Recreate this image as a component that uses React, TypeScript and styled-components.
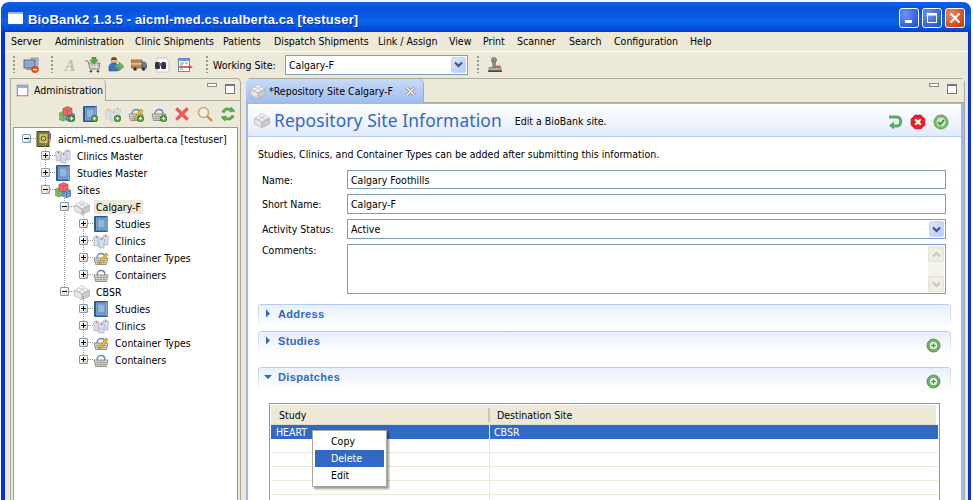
import React from "react";
import styled, { createGlobalStyle } from "styled-components";

const Global = createGlobalStyle`
  html, body { margin: 0; padding: 0; background: #fff; overflow: hidden; }
  body { font-family: "DejaVu Sans Condensed", "DejaVu Sans", sans-serif; font-stretch: condensed; font-size: 10.5px; color: #000; }
`;

const Screen = styled.div`
  width: 973px; height: 500px; box-sizing: border-box; padding: 2px 2px 0 1px; overflow: hidden; background: #fff;
`;
const Frame = styled.div`
  height: 100%; display: flex; flex-direction: column; box-sizing: border-box;
  border-radius: 8px 8px 0 0; overflow: hidden;
  background: linear-gradient(#0a5fe8 0, #0453dd 8px, #0a63ee 20px, #0349d0 28px, #0831d9 30px);
  padding: 0 3px 0 4px;
`;
const TitleBar = styled.div`
  height: 30px; flex: none; display: flex; align-items: center; padding: 0 3px 0 3px;
`;
const AppGlyph = styled.div`
  width: 15px; height: 12px; flex: none; background: #fff; border-top: 2px solid #9bb8ee; box-sizing: border-box; margin: 2px 5px 0 0;
`;
const TitleText = styled.div`
  flex: 1; color: #fff; font: bold 13px "Liberation Sans", sans-serif; letter-spacing: 0.17px; margin-top: 4px;
  text-shadow: 1px 1px 0 #0a2fa8; white-space: nowrap;
`;
const WinButtons = styled.div`
  display: flex; gap: 3px; margin-top: 2px;
`;
const WinButton = styled.div<{ $close?: boolean }>`
  width: 20px; height: 20px; box-sizing: border-box; border: 1px solid #fff; border-radius: 3px;
  display: flex; align-items: center; justify-content: center;
  background: ${p => (p.$close ? "radial-gradient(circle at 30% 30%, #e98a6c, #d04a20 70%, #b83a12)" : "radial-gradient(circle at 30% 30%, #6f95ef, #2e5fdd 70%, #2048c4)")};
`;
const Client = styled.div`
  flex: 1; min-height: 0; display: flex; flex-direction: column; background: #ece9d8;
`;
const MenuBar = styled.div`
  height: 20px; flex: none; box-sizing: border-box; display: flex; align-items: center; padding: 0 0 1px 6px; border-bottom: 1px solid #fff;
`;
const MenuItem = styled.span<{ $w: number }>`width: ${p => p.$w}px; flex: none; white-space: nowrap;`;
const ToolBar = styled.div`
  height: 25px; flex: none; display: flex; align-items: center; padding-left: 8px;
`;
const Grip = styled.span<{ $gap?: number; $lead?: number }>`
  width: 2px; height: 17px; flex: none; margin-right: ${p => p.$gap ?? 8}px; margin-left: ${p => p.$lead ?? 0}px;
  background: repeating-linear-gradient(#9a978a 0 2px, transparent 2px 4px);
`;
const ToolIcon = styled.span<{ $mr?: number }>`
  width: 16px; height: 16px; flex: none; margin-right: ${p => p.$mr ?? 7}px; display: block;
  & > svg { display: block; }
`;
const WorkLabel = styled.span`width: 72px; flex: none; white-space: nowrap;`;
const Combo = styled.div<{ $w?: string; $h?: number }>`
  width: ${p => p.$w ?? "183px"}; height: ${p => p.$h ?? 20}px; box-sizing: border-box; background: #fff; border: 1px solid #7f9db9;
  display: flex; align-items: center; padding: 0 1px 0 3px; flex: none;
`;
const ComboText = styled.span`flex: 1;`;
const ComboBtn = styled.span`
  width: 15px; height: 16px; border-radius: 2px; display: flex; align-items: center; justify-content: center;
  background: linear-gradient(135deg, #dbe6fd, #b4c9f7); border: 1px solid #c4d4f6; box-sizing: border-box;
`;
const Workbench = styled.div`
  flex: 1; min-height: 0; display: flex; gap: 5px; padding: 1px 3px 0 5px;
`;
const View = styled.section`
  width: 231px; flex: none; box-sizing: border-box; border: 1px solid #aca899; border-bottom: 0; border-radius: 0 5px 0 0;
  display: flex; flex-direction: column;
`;
const ViewTabs = styled.div`
  height: 22px; flex: none; display: flex; box-sizing: border-box;
`;
const ViewTab = styled.div`
  width: 95px; box-sizing: border-box; border-right: 1px solid #aca899; border-radius: 0 5px 0 0; display: flex; align-items: center; padding-left: 5px; gap: 5px;
`;
const TabRest = styled.div`
  flex: 1; border-bottom: 1px solid #aca899; display: flex; justify-content: flex-end; align-items: flex-start; gap: 8px; padding: 4px 5px 0 0;
`;
const MinBtn = styled.span`
  width: 8px; height: 2px; background: #fff; border: 1px solid #8a8a80; display: block;
`;
const MaxBtn = styled.span`
  width: 8px; height: 7px; background: #fff; border: 1px solid #777; border-top-width: 2px; display: block; margin-top: 1px;
`;
const ViewBar = styled.div`
  height: 26px; flex: none; display: flex; justify-content: flex-end; align-items: center; gap: 7px; padding-right: 4px;
`;
const TreeBox = styled.div`
  flex: 1; min-height: 0; margin: 0 2px; background: #fff; border: 1px solid #7f9db9; border-bottom: 0; padding-top: 2px; overflow: hidden;
`;
const Row = styled.div<{ $depth: number }>`
  height: 17px; display: flex; align-items: center; padding-left: ${p => 8 + p.$depth * 19}px; position: relative; white-space: nowrap;
`;
const Toggle = styled.span`
  width: 9px; height: 9px; flex: none; box-sizing: border-box; margin-right: 5px; border: 1px solid #7f9db9; border-radius: 1px; position: relative; z-index: 1;
  background: linear-gradient(135deg, #fff 20%, #e4e0d0 80%, #c9c4ae);
  display: flex; align-items: center; justify-content: center;
  &::after { content: ""; position: absolute; left: 8px; top: 3px; width: 5px; border-top: 1px dotted #999; }
`;
const Sign = styled.span<{ $open: boolean }>`
  position: relative; width: 5px; height: 1px; background: #000; display: block;
  &::after { content: ""; display: ${p => (p.$open ? "none" : "block")}; position: absolute; left: 2px; top: -2px; width: 1px; height: 5px; background: #000; }
`;
const NodeLabel = styled.span<{ $sel?: boolean }>`
  margin-left: ${p => (p.$sel ? 4 : 6)}px; padding: ${p => (p.$sel ? "1px 2px" : "0")}; background: ${p => (p.$sel ? "#ece9d8" : "transparent")};
`;
const Group = styled.div<{ $x: number; $tail: number }>`
  position: relative;
  &::before { content: ""; position: absolute; left: ${p => p.$x}px; top: -4px; bottom: ${p => p.$tail}px; border-left: 1px dotted #999; }
`;
const NodeIcon = styled.span`
  width: 16px; height: 16px; flex: none; display: block; & > svg { display: block; }
`;
const Editor = styled.section`
  flex: 1; min-width: 0; display: flex; flex-direction: column; box-sizing: border-box; border-top: 1px solid #aca899; border-right: 1px solid #aca899; border-radius: 5px 5px 0 0;
`;
const EditorTabs = styled.div`
  height: 24px; flex: none; display: flex; background: #ece9d8;
`;
const EditorTab = styled.div`
  width: 178px; box-sizing: border-box; border-radius: 4px 5px 0 0; background: linear-gradient(#c9daf8, #9fbcf0); display: flex; align-items: center; padding-left: 4px; white-space: nowrap; border-right: 1px solid #aca899;
`;
const EditorTabLabel = styled.span`margin-left: 3px; width: 136px;`;
const EditorRest = styled.div`
  flex: 1; border-bottom: 1px solid #aca899; display: flex; justify-content: flex-end; align-items: flex-start; gap: 8px; padding: 4px 7px 0 0;
`;
const EditorBody = styled.div`
  flex: 1; min-height: 0; background: #fff; border: solid #9db9eb; border-width: 1px 3px 0 2px; display: flex; flex-direction: column; overflow: hidden;
`;
const FormHead = styled.header`
  height: 33px; flex: none; box-sizing: border-box; display: flex; align-items: center; padding: 0 12px 0 6px;
  background: linear-gradient(#fff, #e3ebfa); border-bottom: 1px solid #b6ccf2;
`;
const FormTitle = styled.h1`
  margin: 0 13px 0 4px; font: normal 17.4px "Noto Sans", "DejaVu Sans", sans-serif; color: #3168c6; white-space: nowrap; letter-spacing: 0.1px;
`;
const FormSub = styled.span`flex: 1; margin-top: 2px;`;
const HeadIcons = styled.div`display: flex; gap: 7px; margin-top: 3px;`;
const Body = styled.div`
  flex: 1; min-height: 0; padding: 10px 10px 0 10px; display: flex; flex-direction: column;
`;
const Intro = styled.p`margin: 0 0 9px; line-height: 14px; height: 14px;`;
const Fields = styled.div`
  display: grid; grid-template-columns: 85px 1fr; grid-template-rows: 19px 20px 20px 50px; row-gap: 5px; padding: 0 5px 0 4px; margin-bottom: 10px;
`;
const Label = styled.label<{ $top?: boolean }>`
  align-self: ${p => (p.$top ? "start" : "center")};
`;
const Input = styled.div`
  box-sizing: border-box; border: 1px solid #7f9db9; background: #fff; display: flex; align-items: center; padding-left: 3px;
`;
const TextArea = styled.div`
  box-sizing: border-box; border: 1px solid #7f9db9; background: #fff; display: flex; justify-content: flex-end; padding: 1px;
`;
const Scroll = styled.div`
  width: 16px; display: flex; flex-direction: column; justify-content: space-between; background: #f5f4ec;
`;
const ScrollBtn = styled.span`
  height: 16px; border: 1px solid #e3e1d3; border-radius: 2px; background: #efeee5; display: flex; align-items: center; justify-content: center; box-sizing: border-box;
`;
const Section = styled.div<{ $mb: number }>`
  height: 24px; flex: none; box-sizing: border-box; margin-bottom: ${p => p.$mb}px; display: flex; justify-content: space-between; padding: 1px 10px 0 5px;
  border-top: 1px solid #b6ccf2; border-radius: 4px 4px 0 0;
  background:
    linear-gradient(#b6ccf2, #fff) left top / 1px 100% no-repeat,
    linear-gradient(#b6ccf2, #fff) right top / 1px 100% no-repeat,
    linear-gradient(#e9f0fc, #fff);
`;
const SectionTitle = styled.div`
  display: flex; align-items: center; gap: 6px; height: 15px; font-weight: bold; color: #2f66c4; font-size: 11px; font-family: "Liberation Sans", sans-serif; font-stretch: normal; letter-spacing: 0.35px;
`;
const PlusWrap = styled.span`
  display: block; margin-top: 5px; width: 15px; height: 15px; & > svg { display: block; }
`;
const Table = styled.div`
  flex: 1; min-height: 0; position: relative; margin: 1px 11px 0; border: 1px solid #7f9db9; border-bottom: 0; background: #fff; padding: 1px 1px 0 1px;
`;
const HeadRow = styled.div`
  display: grid; grid-template-columns: 217px 1fr; height: 20px; background: #ece9d8; border-bottom: 1px solid #dcd9c8; box-sizing: border-box; align-items: center; margin-right: 2px;
`;
const HeadCell = styled.div<{ $line?: boolean }>`
  padding-left: ${p => (p.$line ? "7px" : "8px")}; ${p => (p.$line ? "border-left: 2px solid #c9c6b6;" : "")} height: 14px; line-height: 14px;
`;
const DataRow = styled.div<{ $sel?: boolean }>`
  display: grid; grid-template-columns: 218px 1fr; height: 14px; line-height: 14px; box-sizing: border-box; color: ${p => (p.$sel ? "#fff" : "#000")};
  background: ${p => (p.$sel ? "#316ac5" : "#fff")}; ${p => (p.$sel ? "" : "border-bottom: 1px solid #ece9d8;")}
`;
const Cell = styled.div<{ $line?: boolean }>`
  padding-left: ${p => (p.$line ? "4px" : "5px")}; ${p => (p.$line ? "border-left: 1px solid #ece9d8;" : "")}
`;
const ContextMenu = styled.div`
  position: absolute; left: 42px; top: 26px; width: 75px; box-sizing: border-box; background: #fff; border: 1px solid #aca899; padding: 2px; z-index: 3;
  box-shadow: 2px 2px 2px rgba(0,0,0,.4);
`;
const CtxItem = styled.div<{ $on?: boolean }>`
  height: 17px; line-height: 17px; padding-left: 16px; color: ${p => (p.$on ? "#fff" : "#000")}; background: ${p => (p.$on ? "#316ac5" : "transparent")};
`;

/* ---------- icons ---------- */
const S: React.FC<{ size?: number; children: React.ReactNode }> = ({ size = 16, children }) => (
  <svg width={size} height={size} viewBox="0 0 16 16">{children}</svg>
);
const PlusBadge = () => (
  <>
    <circle cx="12.5" cy="12.5" r="3.3" fill="#4c9a3c" stroke="#2f6e24" strokeWidth=".6" />
    <path d="M12.5 10.7v3.6M10.7 12.5h3.6" stroke="#fff" strokeWidth="1.2" />
  </>
);
const BrickShape = () => (
  <>
    <path d="M.5 6.500 8 3l7.500 3.500L8 10Z" fill="#f2f2f2" stroke="#b5b5b5" strokeWidth=".7" />
    <path d="M.5 6.500 8 10v5.500L.5 12Z" fill="#e6e6e6" stroke="#b5b5b5" strokeWidth=".7" />
    <path d="M15.500 6.500 8 10v5.500l7.500-3.500Z" fill="#cdcdcd" stroke="#a8a8a8" strokeWidth=".7" />
    <ellipse cx="4.800" cy="5.600" rx="2.300" ry="1.600" fill="#fafafa" stroke="#b5b5b5" strokeWidth=".6" />
    <ellipse cx="11.200" cy="5.600" rx="2.300" ry="1.600" fill="#fafafa" stroke="#b5b5b5" strokeWidth=".6" />
    <ellipse cx="8" cy="3.400" rx="2.300" ry="1.600" fill="#fafafa" stroke="#b5b5b5" strokeWidth=".6" />
    <ellipse cx="8" cy="7.700" rx="2.300" ry="1.600" fill="#fafafa" stroke="#b5b5b5" strokeWidth=".6" />
  </>
);
const Brick = () => <S><BrickShape /></S>;
const BookShape = () => (
  <>
    <rect x="1" y="0" width="14" height="16" rx="1" fill="#2f5a8e" />
    <rect x="3" y="1.500" width="10.500" height="13" fill="#7aa3d0" />
    <rect x="4.500" y="3" width="7.500" height="9" fill="#8fb6dc" stroke="#4f7fb0" strokeWidth=".7" />
    <rect x="13.500" y="1" width="1" height="14" fill="#b7cde4" />
  </>
);
const Book = () => <S><BookShape /></S>;
const CoatShape = ({ x, y }: { x: number; y: number }) => (
  <g transform={`translate(${x} ${y})`}>
    <path d="M2 0h3l2 2-1 3V10H1V5L0 2Z" fill="#d5dbea" stroke="#a0a8be" strokeWidth=".6" />
    <path d="M3 1.400h1.200M3.600.8v1.200" stroke="#d8383a" strokeWidth=".8" />
  </g>
);
const ClinicShape = () => (
  <>
    <CoatShape x={0} y={3} />
    <CoatShape x={9} y={2} />
    <CoatShape x={5} y={5} />
  </>
);
const Clinic = () => <S><ClinicShape /></S>;
const Cube = ({ x, y, c, d }: { x: number; y: number; c: string; d: string }) => (
  <g transform={`translate(${x} ${y})`}>
    <path d="M0 2 4.500 0 9 2v5.500L4.500 9.500 0 7.500Z" fill={c} stroke={d} strokeWidth=".6" />
    <path d="M0 2 4.500 4 9 2M4.500 4v5.500" stroke={d} strokeWidth=".5" fill="none" />
  </g>
);
const SitesShape = () => (
  <>
    <Cube x={-.5} y={5.500} c="#86bb76" d="#4d8a46" />
    <Cube x={7} y={6.500} c="#6e9bd0" d="#3a669f" />
    <Cube x={4} y={.5} c="#ee6a6a" d="#bb3a3a" />
  </>
);
const Sites = () => <S><SitesShape /></S>;
const BasketShape = () => (
  <>
    <path d="M4 8C4 2 12 2 12 8" fill="none" stroke="#5f88c0" strokeWidth="1.400" />
    <path d="M1 8h14l-1.600 6.500H2.600Z" fill="#dcdcd6" stroke="#7c7c74" strokeWidth=".8" />
    <path d="M2 10.500h12M2.500 12.500h11M5 8v6.500M8 8v6.500M11 8v6.500" stroke="#8d8d85" strokeWidth=".6" />
  </>
);
const Basket = () => <S><BasketShape /></S>;
const TypesShape = () => (
  <>
    <BasketShape />
    <path d="M7 11 13 3l2 1.600-6 8-3 1Z" fill="#f2c23e" stroke="#a77a14" strokeWidth=".7" />
  </>
);
const Types = () => <S><TypesShape /></S>;
const RootBook = () => (
  <S>
    <rect x="1" y=".5" width="12" height="15" fill="#7f7a3a" stroke="#4f4c20" />
    <rect x="3.500" y="3" width="8" height="9" fill="#c9c46c" />
    <circle cx="7.500" cy="7.500" r="2.400" fill="none" stroke="#5d5a26" strokeWidth="1" />
    <rect x="13" y="2" width="2" height="3" fill="#2b8fe0" />
    <rect x="13" y="5" width="2" height="3" fill="#e33cc0" />
    <rect x="13" y="8" width="2" height="3" fill="#e8b020" />
  </S>
);
const WindowIcon = () => (
  <S size={13}>
    <rect x="1.500" y="1.500" width="13" height="13" fill="#fff" stroke="#4f6f9f" />
    <rect x="2" y="2" width="12" height="3" fill="#8eb2e6" />
  </S>
);
const Computer = () => (
  <S>
    <rect x="8" y="1" width="7" height="12" fill="#b6bbc5" stroke="#7c8290" strokeWidth=".7" />
    <rect x="1" y="3" width="11" height="8" fill="#8aa8d0" stroke="#5e6a80" />
    <rect x="3" y="11" width="7" height="2" fill="#8b92a0" />
    <circle cx="12" cy="12.500" r="3.300" fill="#e0561e" stroke="#a93c10" strokeWidth=".5" />
    <rect x="10" y="12" width="4" height="1.200" fill="#fff" />
  </S>
);
const GreyA = () => (
  <S>
    <text x="8" y="14" textAnchor="middle" fontFamily="Liberation Serif" fontStyle="italic" fontWeight="bold" fontSize="16" fill="#bdbcb0">A</text>
  </S>
);
const Cart = () => (
  <S>
    <path d="M0 4h3l2 8h9l1-6H4" fill="#e4e4dc" stroke="#777" strokeWidth=".9" />
    <path d="M5 8h9.400M7 6v6M10 6v6M13 6v6" stroke="#999" strokeWidth=".5" />
    <circle cx="6" cy="14.200" r="1.300" fill="#555" /><circle cx="13" cy="14.200" r="1.300" fill="#555" />
    <path d="M7 0h4v3h2.200L9 7 4.800 3H7Z" fill="#58a848" stroke="#38802e" strokeWidth=".5" />
  </S>
);
const Person = () => (
  <S>
    <circle cx="6" cy="3.500" r="3" fill="#eab988" stroke="#a26a3a" strokeWidth=".5" />
    <path d="M3 3c0-4 6-4 6 0Z" fill="#7a4a20" />
    <path d="M1 14c-1-7 2-8 5-8s5 2 4 8Z" fill="#3d70c0" stroke="#2a4d90" strokeWidth=".5" />
    <path d="M7 8h4V5l5 4.500L11 14v-3H7Z" fill="#6ab55a" stroke="#3c8a30" strokeWidth=".6" />
  </S>
);
const Truck = () => (
  <S>
    <rect x="0" y="3" width="11" height="8" fill="#c2894a" stroke="#7a5326" strokeWidth=".7" />
    <rect x="0" y="6" width="11" height="1.600" fill="#e8c48c" />
    <path d="M11 5h3l2 3v3h-5Z" fill="#6d7c92" stroke="#3f4a5a" strokeWidth=".6" />
    <circle cx="4" cy="12" r="1.800" fill="#333" /><circle cx="12.500" cy="12" r="1.800" fill="#333" />
  </S>
);
const Binoc = () => (
  <S>
    <path d="M3 1h9l3 3v11H3Z" fill="#fafafa" stroke="#b8b8b0" strokeWidth=".7" />
    <rect x="1" y="5" width="5" height="7" rx="1.500" fill="#30343e" />
    <rect x="7" y="5" width="5" height="7" rx="1.500" fill="#30343e" />
    <rect x="5" y="6" width="3" height="3" fill="#666" />
  </S>
);
const FormIcon = () => (
  <S>
    <rect x="1.500" y="1.500" width="11" height="13" fill="#fff" stroke="#6b8cc0" />
    <rect x="2" y="2" width="10" height="2" fill="#6b9bd8" />
    <path d="M3 6h4M8 6h3M3 8h3M3 12h3" stroke="#6aa86a" strokeWidth="1" />
    <path d="M2 10h10" stroke="#e03030" strokeWidth="1.600" />
    <path d="M12 8.200 16 10l-4 1.800Z" fill="#e03030" />
  </S>
);
const Stamp = () => (
  <S>
    <circle cx="7" cy="3" r="2.600" fill="#8c8c8c" stroke="#555" strokeWidth=".5" />
    <rect x="5.500" y="4.500" width="3" height="6" fill="#8c8c8c" stroke="#555" strokeWidth=".4" />
    <path d="M2 10.500h12v3H2Z" fill="#b0aea6" stroke="#5c5c58" strokeWidth=".6" />
    <rect x="7.500" y="8.500" width="6" height="2.200" fill="#e2505a" />
    <rect x="1" y="13.500" width="14" height="1.500" fill="#4a4a48" />
  </S>
);
const RedX = () => (
  <S>
    <path d="M1.500 3.500 3.500 1.500 8 6l4.500-4.500 2 2L10 8l4.500 4.500-2 2L8 10l-4.500 4.500-2-2L6 8Z" fill="#ee5a5a" stroke="#d84040" strokeWidth=".5" />
  </S>
);
const Magnify = () => (
  <S>
    <circle cx="6.500" cy="6.500" r="5" fill="#f2efe6" stroke="#d4a468" strokeWidth="1.500" />
    <path d="M10.200 10.200 15 15" stroke="#c08a48" strokeWidth="2.200" />
  </S>
);
const Refresh = () => (
  <S>
    <path d="M2 6C3 2 8 1 11 3V1l4 4-5 1V4.500C8 3.500 5 4 4.500 6.500Z" fill="#5fb05a" stroke="#3d8a3a" strokeWidth=".6" />
    <path d="M14 10c-1 4-6 5-9 3v2l-4-4 5-1v1.500c2 1 5 .5 5.500-2Z" fill="#5fb05a" stroke="#3d8a3a" strokeWidth=".6" />
  </S>
);
const Undo = () => (
  <S>
    <path d="M2 3h8c5 0 5 9 0 9H5" fill="none" stroke="#5ea85e" strokeWidth="2.800" />
    <path d="M7 8 2 12l5 4Z" fill="#5ea85e" transform="translate(0 -.5)" />
  </S>
);
const CancelIcon = () => (
  <S>
    <path d="M5 1h6l4 4v6l-4 4H5l-4-4V5Z" fill="#ee1c24" stroke="#c81018" strokeWidth=".5" />
    <path d="M5.200 5.200 10.800 10.800M10.800 5.200 5.200 10.800" stroke="#fff" strokeWidth="2.200" />
  </S>
);
const OkIcon = () => (
  <S>
    <circle cx="8" cy="8" r="7" fill="#77bb6c" stroke="#4f8f49" strokeWidth=".8" />
    <circle cx="8" cy="8" r="4.500" fill="#cfe8c8" />
    <path d="M5 8.200 7.300 10.500 11 6" fill="none" stroke="#3f8a3a" strokeWidth="1.800" />
  </S>
);
const GreenPlus = () => (
  <S size={15}>
    <circle cx="8" cy="8" r="7" fill="#6cb562" stroke="#4a8c45" strokeWidth=".8" />
    <circle cx="8" cy="8" r="3.800" fill="#fff" />
    <path d="M8 5.500v5M5.500 8h5" stroke="#4f9a48" strokeWidth="1.600" />
  </S>
);
const Chev: React.FC<{ color?: string }> = ({ color = "#3c4f78" }) => (
  <svg width="9" height="7" viewBox="0 0 9 7"><path d="M1 1.500 4.500 5 8 1.500" fill="none" stroke={color} strokeWidth="2" /></svg>
);
const ChevUp = () => (
  <svg width="9" height="7" viewBox="0 0 9 7"><path d="M1 5.500 4.500 2 8 5.500" fill="none" stroke="#c9c7ba" strokeWidth="2" /></svg>
);
const Tri: React.FC<{ open?: boolean }> = ({ open }) => (
  <svg width="9" height="9" viewBox="0 0 9 9">
    {open ? <path d="M1 3h8L5 7Z" fill="#2f66c4" /> : <path d="M3 .5 7 4.500 3 8.500Z" fill="#2f66c4" />}
  </svg>
);
const CloseX = () => (
  <svg width="11" height="11" viewBox="0 0 11 11">
    <path d="M1.500 1.500 9.500 9.500M9.500 1.500 1.500 9.500" stroke="#8a8a80" strokeWidth="3" />
    <path d="M1.500 1.500 9.500 9.500M9.500 1.500 1.500 9.500" stroke="#fff" strokeWidth="1.300" />
  </svg>
);

/* ---------- data ---------- */
type Node = { label: string; icon: React.ReactNode; open?: boolean; sel?: boolean; kids?: Node[] };
const siteKids: Node[] = [
  { label: "Studies", icon: <Book /> },
  { label: "Clinics", icon: <Clinic /> },
  { label: "Container Types", icon: <Types /> },
  { label: "Containers", icon: <Basket /> },
];
const tree: Node = {
  label: "aicml-med.cs.ualberta.ca [testuser]", icon: <RootBook />, open: true, kids: [
    { label: "Clinics Master", icon: <Clinic /> },
    { label: "Studies Master", icon: <Book /> },
    {
      label: "Sites", icon: <Sites />, open: true, kids: [
        { label: "Calgary-F", icon: <Brick />, open: true, sel: true, kids: siteKids },
        { label: "CBSR", icon: <Brick />, open: true, kids: siteKids },
      ],
    },
  ],
};
const countRows = (n: Node): number => 1 + (n.kids ?? []).reduce((a, k) => a + countRows(k), 0);
const TreeNode: React.FC<{ node: Node; depth: number }> = ({ node, depth }) => {
  const kids = node.kids ?? [];
  const last = kids[kids.length - 1];
  return (
    <>
      <Row $depth={depth}>
        <Toggle><Sign $open={!!node.open} /></Toggle>
        <NodeIcon>{node.icon}</NodeIcon>
        <NodeLabel $sel={node.sel}>{node.label}</NodeLabel>
      </Row>
      {kids.length > 0 && (
        <Group $x={8 + (depth + 1) * 19 + 4} $tail={countRows(last) * 17 - 8}>
          {kids.map((k, i) => <TreeNode key={i} node={k} depth={depth + 1} />)}
        </Group>
      )}
    </>
  );
};

const menus: [string, number][] = [
  ["Server", 44], ["Administration", 80], ["Clinic Shipments", 88], ["Patients", 51], ["Dispatch Shipments", 104],
  ["Link / Assign", 71], ["View", 34], ["Print", 34], ["Scanner", 52], ["Search", 45], ["Configuration", 76], ["Help", 40],
];

export default function App() {
  return (
    <Screen>
      <Global />
      <Frame>
        <TitleBar>
          <AppGlyph />
          <TitleText>BioBank2 1.3.5 - aicml-med.cs.ualberta.ca [testuser]</TitleText>
          <WinButtons>
            <WinButton>
              <svg width="12" height="12" viewBox="0 0 12 12"><rect x="2" y="8" width="7" height="3" fill="#fff" /></svg>
            </WinButton>
            <WinButton>
              <svg width="12" height="12" viewBox="0 0 12 12"><rect x="1.500" y="1.500" width="9" height="9" fill="none" stroke="#fff" /><rect x="1" y="1" width="10" height="2.500" fill="#fff" /></svg>
            </WinButton>
            <WinButton $close>
              <svg width="12" height="12" viewBox="0 0 12 12"><path d="M1.500 1.500 10.500 10.500M10.500 1.500 1.500 10.500" stroke="#fff" strokeWidth="2" /></svg>
            </WinButton>
          </WinButtons>
        </TitleBar>
        <Client>
          <MenuBar>{menus.map(([m, w]) => <MenuItem key={m} $w={w}>{m}</MenuItem>)}</MenuBar>
          <ToolBar>
            <Grip />
            <ToolIcon $mr={12}><Computer /></ToolIcon>
            <Grip $gap={9} />
            <ToolIcon><GreyA /></ToolIcon>
            <ToolIcon><Cart /></ToolIcon>
            <ToolIcon><Person /></ToolIcon>
            <ToolIcon><Truck /></ToolIcon>
            <ToolIcon><Binoc /></ToolIcon>
            <ToolIcon $mr={13}><FormIcon /></ToolIcon>
            <Grip $gap={5} />
            <WorkLabel>Working Site:</WorkLabel>
            <Combo><ComboText>Calgary-F</ComboText><ComboBtn><Chev /></ComboBtn></Combo>
            <Grip $lead={9} />
            <ToolIcon><Stamp /></ToolIcon>
          </ToolBar>
          <Workbench>
            <View>
              <ViewTabs>
                <ViewTab><WindowIcon />Administration</ViewTab>
                <TabRest><MinBtn /><MaxBtn /></TabRest>
              </ViewTabs>
              <ViewBar>
                <NodeIcon><S><SitesShape /><PlusBadge /></S></NodeIcon>
                <NodeIcon><S><BookShape /><PlusBadge /></S></NodeIcon>
                <NodeIcon><S><g opacity=".6"><ClinicShape /></g><PlusBadge /></S></NodeIcon>
                <NodeIcon><S><TypesShape /><PlusBadge /></S></NodeIcon>
                <NodeIcon><S><BasketShape /><PlusBadge /></S></NodeIcon>
                <NodeIcon><RedX /></NodeIcon>
                <NodeIcon><Magnify /></NodeIcon>
                <NodeIcon><Refresh /></NodeIcon>
              </ViewBar>
              <TreeBox><TreeNode node={tree} depth={0} /></TreeBox>
            </View>
            <Editor>
              <EditorTabs>
                <EditorTab>
                  <NodeIcon><Brick /></NodeIcon>
                  <EditorTabLabel>*Repository Site Calgary-F</EditorTabLabel>
                  <CloseX />
                </EditorTab>
                <EditorRest><MinBtn /><MaxBtn /></EditorRest>
              </EditorTabs>
              <EditorBody>
                <FormHead>
                  <NodeIcon><Brick /></NodeIcon>
                  <FormTitle>Repository Site Information</FormTitle>
                  <FormSub>Edit a BioBank site.</FormSub>
                  <HeadIcons><NodeIcon><Undo /></NodeIcon><NodeIcon><CancelIcon /></NodeIcon><NodeIcon><OkIcon /></NodeIcon></HeadIcons>
                </FormHead>
                <Body>
                  <Intro>Studies, Clinics, and Container Types can be added after submitting this information.</Intro>
                  <Fields>
                    <Label>Name:</Label><Input>Calgary Foothills</Input>
                    <Label>Short Name:</Label><Input>Calgary-F</Input>
                    <Label>Activity Status:</Label>
                    <Combo $w="100%"><ComboText>Active</ComboText><ComboBtn><Chev /></ComboBtn></Combo>
                    <Label $top>Comments:</Label>
                    <TextArea><Scroll><ScrollBtn><ChevUp /></ScrollBtn><ScrollBtn><Chev color="#c9c7ba" /></ScrollBtn></Scroll></TextArea>
                  </Fields>
                  <Section $mb={3}><SectionTitle><Tri />Address</SectionTitle></Section>
                  <Section $mb={12}><SectionTitle><Tri />Studies</SectionTitle><PlusWrap><GreenPlus /></PlusWrap></Section>
                  <Section $mb={11}><SectionTitle><Tri open />Dispatches</SectionTitle><PlusWrap><GreenPlus /></PlusWrap></Section>
                  <Table>
                    <HeadRow><HeadCell>Study</HeadCell><HeadCell $line>Destination Site</HeadCell></HeadRow>
                    <DataRow $sel><Cell>HEART</Cell><Cell $line>CBSR</Cell></DataRow>
                    {[0, 1, 2, 3, 4].map(i => <DataRow key={i}><Cell /><Cell $line /></DataRow>)}
                    <ContextMenu>
                      <CtxItem>Copy</CtxItem>
                      <CtxItem $on>Delete</CtxItem>
                      <CtxItem>Edit</CtxItem>
                    </ContextMenu>
                  </Table>
                </Body>
              </EditorBody>
            </Editor>
          </Workbench>
        </Client>
      </Frame>
    </Screen>
  );
}
